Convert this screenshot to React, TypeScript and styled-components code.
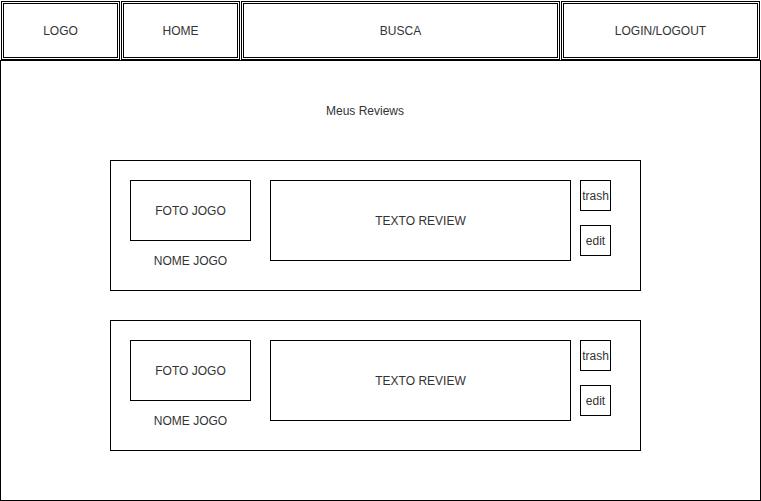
import styled, { createGlobalStyle } from "styled-components";

const GlobalStyle = createGlobalStyle`
  html, body {
    margin: 0;
    padding: 0;
    background: #ffffff;
  }
  body {
    font-family: "Liberation Sans", Arial, Helvetica, sans-serif;
    font-size: 12px;
    color: #333333;
  }
  * {
    box-sizing: border-box;
  }
`;

const Page = styled.div`
  width: 761px;
  height: 501px;
  display: flex;
  flex-direction: column;
`;

const Header = styled.header`
  display: flex;
  gap: 1px;
  padding: 1px 0 0 1px;
  height: 60px;
`;

const NavCell = styled.div<{ $width: number }>`
  width: ${(p) => p.$width}px;
  height: 59px;
  border: 3px double #000000;
  display: flex;
  align-items: center;
  justify-content: center;
`;

const Main = styled.main`
  flex: 1;
  border: 1px solid #000000;
  padding-top: 40px;
  display: flex;
  flex-direction: column;
`;

const Title = styled.div`
  width: 90px;
  margin-left: 319px;
  height: 20px;
  line-height: 20px;
  text-align: center;
`;

const ReviewList = styled.div`
  margin-top: 39px;
  margin-left: 109px;
  display: flex;
  flex-direction: column;
  gap: 29px;
`;

const Card = styled.div`
  width: 531px;
  height: 131px;
  border: 1px solid #000000;
  padding: 19px 0 0 19px;
  display: flex;
  align-items: flex-start;
`;

const GameColumn = styled.div`
  display: flex;
  flex-direction: column;
  align-items: center;
  width: 121px;
`;

const Box = styled.div<{ $w: number; $h: number }>`
  width: ${(p) => p.$w}px;
  height: ${(p) => p.$h}px;
  border: 1px solid #000000;
  display: flex;
  align-items: center;
  justify-content: center;
`;

const GameName = styled.div`
  height: 40px;
  line-height: 40px;
  text-align: center;
`;

const ReviewText = styled(Box)`
  margin-left: 19px;
`;

const Actions = styled.div`
  margin-left: 9px;
  display: flex;
  flex-direction: column;
  gap: 14px;
`;

const ActionButton = styled(Box)`
  font-size: 12px;
`;

const reviews = [1, 2];

export default function App() {
  return (
    <>
      <GlobalStyle />
      <Page>
        <Header>
          <NavCell $width={119}>LOGO</NavCell>
          <NavCell $width={119}>HOME</NavCell>
          <NavCell $width={319}>BUSCA</NavCell>
          <NavCell $width={199}>LOGIN/LOGOUT</NavCell>
        </Header>
        <Main>
          <Title>Meus Reviews</Title>
          <ReviewList>
            {reviews.map((id) => (
              <Card key={id}>
                <GameColumn>
                  <Box $w={121} $h={61}>FOTO JOGO</Box>
                  <GameName>NOME JOGO</GameName>
                </GameColumn>
                <ReviewText $w={301} $h={81}>
                  TEXTO REVIEW
                </ReviewText>
                <Actions>
                  <ActionButton $w={31} $h={31}>trash</ActionButton>
                  <ActionButton $w={31} $h={31}>edit</ActionButton>
                </Actions>
              </Card>
            ))}
          </ReviewList>
        </Main>
      </Page>
    </>
  );
}
